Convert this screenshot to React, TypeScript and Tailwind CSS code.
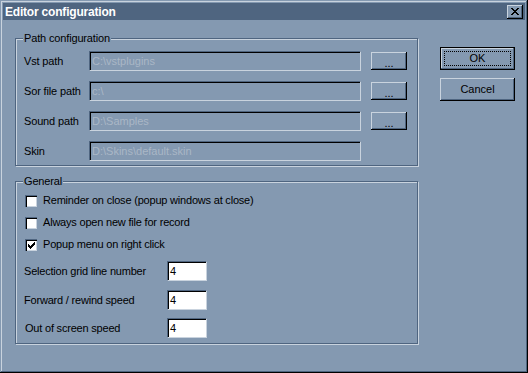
import React from "react";

const font = { fontFamily: '"Liberation Sans", Arial, sans-serif' };

const PathRow = ({ label, value, browse }: { label: string; value: string; browse?: boolean }) => (
  <div className="flex h-[20px] items-center">
    <span className="w-[65px] text-[11px] tracking-[-0.15px] text-black">{label}</span>
    <div className="flex h-[20px] w-[272px] items-center border-t border-l border-t-[#4f6580] border-l-[#4f6580] border-r border-b border-r-[#c9d3de] border-b-[#c9d3de] pl-[2px] text-[11px] text-[#aab7c6] shadow-[inset_1px_1px_0_#000]">
      {value}
    </div>
    {browse && (
      <button className="ml-[10px] flex h-[18px] w-[36px] items-center justify-center pt-[4px] text-[11px] text-black shadow-[inset_-1px_-1px_0_#000,inset_1px_1px_0_#c9d3de,inset_-2px_-2px_0_#4f6580]">
        ...
      </button>
    )}
  </div>
);

const CheckRow = ({ label, checked }: { label: string; checked?: boolean }) => (
  <div className="flex h-[13px] items-center">
    <div className="flex h-[12px] w-[12px] items-center justify-center bg-white shadow-[inset_1px_1px_0_#4f6580,inset_2px_2px_0_#000,inset_-1px_-1px_0_#c9d3de]">
      {checked && (
        <svg width="7" height="7" viewBox="0 0 7 7" className="ml-[1px] mt-[1px]">
          <path d="M0 2h1v1h1v1h1v-1h1v-1h1v-1h1v-1h1v3h-1v1h-1v1h-1v1h-1v1h-1v-1h-1v-1h-1z" fill="#000" />
        </svg>
      )}
    </div>
    <span className="ml-[6px] text-[11px] tracking-[-0.2px] text-black">{label}</span>
  </div>
);

const NumRow = ({ label, className, labelClass = "" }: { label: string; className: string; labelClass?: string }) => (
  <div className={`flex h-[20px] items-center ${className}`}>
    <span className={`w-[143px] text-[11px] tracking-[-0.2px] text-black ${labelClass}`}>{label}</span>
    <div className="flex h-[20px] w-[40px] items-center bg-white border-t border-l border-t-[#4f6580] border-l-[#4f6580] border-r border-b border-r-[#c9d3de] border-b-[#c9d3de] pl-[2px] text-[11px] text-black shadow-[inset_1px_1px_0_#000]">
      4
    </div>
  </div>
);

const Group = ({ title, className, children }: { title: string; className: string; children: React.ReactNode }) => (
  <div className={`relative w-[403px] border border-[#4f6580] shadow-[inset_1px_1px_0_#c9d3de,1px_1px_0_#c9d3de] ${className}`}>
    <span className="absolute -top-[8px] left-[7px] bg-[#8499b1] px-[1px] text-[11px] leading-[14px] tracking-[-0.15px] text-black">
      {title}
    </span>
    {children}
  </div>
);

export default function App() {
  return (
    <div
      style={font}
      className="flex h-[373px] w-[528px] flex-col bg-[#8499b1] p-[3px] shadow-[inset_-1px_-1px_0_#000,inset_1px_1px_0_#8499b1,inset_-2px_-2px_0_#4f6580,inset_2px_2px_0_#c9d3de]"
    >
      <div className="flex h-[17px] items-center justify-between bg-[#4f6580] pl-[2px] pr-[2px]">
        <span className="text-[12px] font-bold tracking-[-0.2px] text-white">Editor configuration</span>
        <button className="flex h-[14px] w-[16px] items-center justify-center bg-[#8499b1] shadow-[inset_-1px_-1px_0_#000,inset_1px_1px_0_#c9d3de,inset_-2px_-2px_0_#4f6580]">
          <svg width="8" height="7" viewBox="0 0 8 7" className="mb-[1px]">
            <path d="M0 0h2v1h1v1h2v-1h1v-1h2v1h-1v1h-1v1h-1v1h1v1h1v1h1v1h-2v-1h-1v-1h-2v1h-1v1h-2v-1h1v-1h1v-1h1v-1h-1v-1h-1v-1h-1z" fill="#000" />
          </svg>
        </button>
      </div>

      <div className="flex pl-[12px] pt-[18px]">
        <div className="flex flex-col">
          <Group title="Path configuration" className="h-[128px]">
            <div className="flex flex-col gap-[10px] pl-[8px] pt-[12px]">
              <PathRow label="Vst path" value="C:\vstplugins" browse />
              <PathRow label="Sor file path" value="c:\" browse />
              <PathRow label="Sound path" value="D:\Samples" browse />
              <PathRow label="Skin" value="D:\Skins\default.skin" />
            </div>
          </Group>

          <Group title="General" className="mt-[15px] h-[163px]">
            <div className="flex flex-col gap-[9px] pl-[9px] pt-[12px]">
              <CheckRow label="Reminder on close (popup windows at close)" />
              <CheckRow label="Always open new file for record" />
              <CheckRow label="Popup menu on right click" checked />
            </div>
            <div className="flex flex-col pl-[8px]">
              <NumRow label="Selection grid line number" className="mt-[10px]" />
              <NumRow label="Forward / rewind speed" className="mt-[9px]" />
              <NumRow label="Out of screen speed" className="mt-[8px]" labelClass="pl-[1px]" />
            </div>
          </Group>
        </div>

        <div className="ml-[22px] flex flex-col pt-[9px]">
          <button className="h-[23px] w-[75px] border border-black p-[3px] shadow-[inset_-1px_-1px_0_#4f6580,inset_1px_1px_0_#c9d3de]">
            <div className="flex h-full w-full items-center justify-center border border-dotted border-black text-[11px] text-black">
              OK
            </div>
          </button>
          <button className="mt-[8px] flex h-[23px] w-[75px] items-center justify-center text-[11px] text-black shadow-[inset_-1px_-1px_0_#000,inset_1px_1px_0_#c9d3de,inset_-2px_-2px_0_#4f6580]">
            Cancel
          </button>
        </div>
      </div>
    </div>
  );
}
